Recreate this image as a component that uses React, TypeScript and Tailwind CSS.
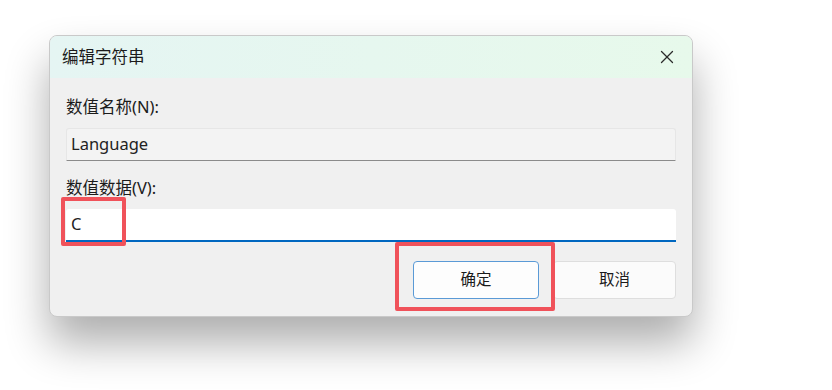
import { X } from "lucide-react";

const font = { fontFamily: '"Noto Sans", "Noto Sans CJK SC", sans-serif' };

export default function App() {
  return (
    <div className="w-[832px] h-[390px] bg-white overflow-hidden pl-[49px] pt-[35px] relative" style={font}>
      <div className="w-[644px] h-[282px] rounded-[8px] border border-[#c9c9c9] bg-[#f0f0f0] shadow-[0_26px_44px_rgba(0,0,0,0.32)] overflow-hidden flex flex-col">
        {/* title bar */}
        <div className="h-[42px] shrink-0 flex items-center justify-between pl-3 pr-[14px] bg-gradient-to-r from-[#e5f5f3] to-[#e7f9eb]">
          <span className="text-[16.5px] text-[#1b1b1b]">编辑字符串</span>
          <X className="w-[22px] h-[22px] text-[#2b2b2b]" strokeWidth={1.4} />
        </div>

        <div className="flex flex-col px-[16px] pt-[18px]">
          <label className="text-[16.5px] text-[#1b1b1b] leading-[22px]">数值名称(N):</label>
          <div className="mt-[10px] h-[33px] bg-[#f3f3f3] border border-[#e6e6e6] border-b-[#8b8b8b] rounded-t-[3px] flex items-center px-[4px] text-[16.5px] text-[#222]">
            Language
          </div>

          <label className="mt-[16px] text-[16.5px] text-[#1b1b1b] leading-[22px]">数值数据(V):</label>
          <div className="mt-[10px] h-[33px] bg-white border-b-2 border-[#0067c0] rounded-t-[3px] flex items-center px-[5px] text-[16.5px] text-[#222]">
            C
          </div>

          <div className="mt-[19px] flex justify-end gap-[14px]">
            <button className="w-[126px] h-[38px] rounded-[4px] bg-[#fdfdfd] border border-[#5a9ad6] text-[15.5px] text-[#1b1b1b]">
              确定
            </button>
            <button className="w-[123px] h-[38px] rounded-[4px] bg-[#fbfbfb] border border-[#dedede] text-[15.5px] text-[#1b1b1b]">
              取消
            </button>
          </div>
        </div>
      </div>

      {/* annotation boxes */}
      <div className="absolute left-[61px] top-[197px] w-[65px] h-[49px] border-[4px] border-[#f0525a] rounded-[2px]" />
      <div className="absolute left-[395px] top-[242px] w-[160px] h-[69px] border-[4px] border-[#f0525a] rounded-[2px]" />
    </div>
  );
}
